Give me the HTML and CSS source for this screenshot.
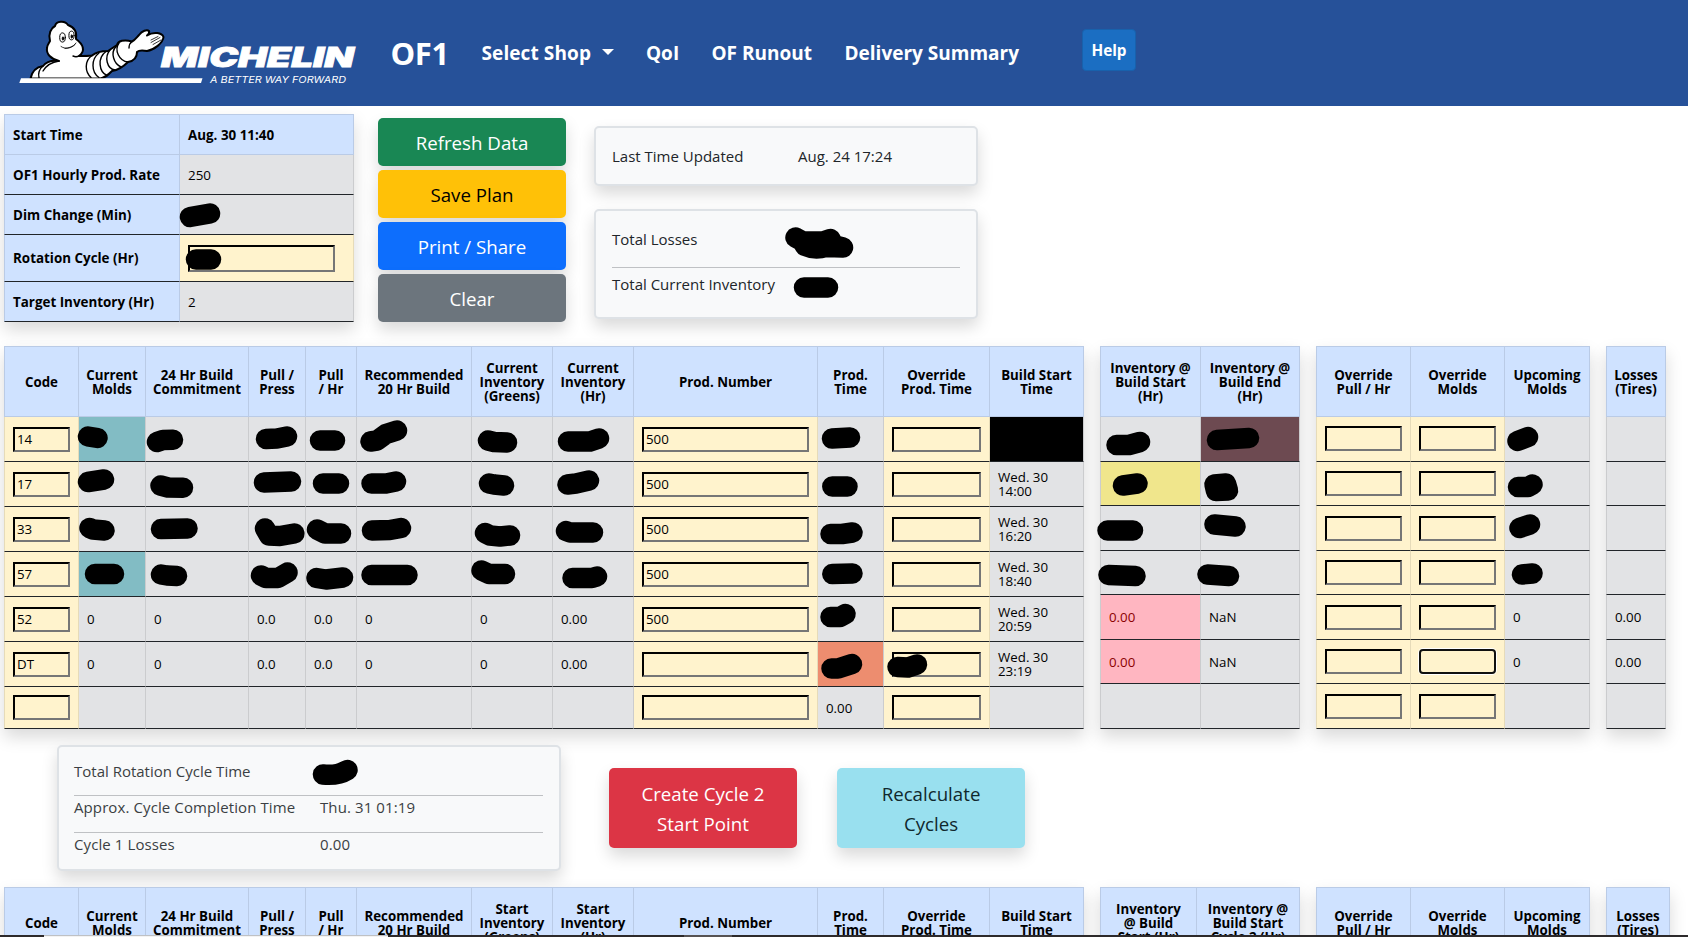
FILE: index.html
```html
<!DOCTYPE html>
<html lang="en">
<head>
<meta charset="utf-8">
<title>OF1</title>
<link rel="stylesheet" href="styles.css">
</head>
<body>
<header class="navbar">
  <svg class="logo" width="340" height="70" viewBox="18 18 340 70" role="img" aria-label="Michelin">
    <g stroke="#000" stroke-width="2" stroke-linejoin="round" stroke-linecap="round" fill="#fff">
      <path d="M30.500 78.500C32 71 37 67 43 66C46 62 51 60 59 61C51 59 46 54 47 48C47 45 49 43 50 41C48 34 51 28 55 26C56 21 65 20 68 25C74 27 77 32 76 39C83 44 86 51 79 56C83 56 88 56 92 55.500C96 52 103 51 108 51L117 45C118 41 124 39 132 41.500C135 40 137 37 139 35C142 31 147 29 149 31C150 33 147 35.500 147 35.500C154 31 162 33 163.500 37C163 43 154 50 147 51C142 50 139 50 137 52C137 57 134 61 128 62C124 66 118 70 112 71C108 75 105 78 100 78.500Z"/>
      <path fill="none" stroke-width="1.400" d="M43 66C39 69 38 74 39 77.500M59 61C52 62 46 66 43 71M79 56C77 57 75 57 73 56M92 55.500C84 61 85 72 91 77.500M99 53C91 59 91 72 99 77.500M106 51.500C97 58 99 72 107 75.500M110 50C104 57 107 69 115 70M116 46.500C110 53 114 64 121 67M119 43C114 50 119 61 128 62M132 41.500C130 43 129 46 129 48"/>
      <path fill="none" stroke-width=".8" d="M151 42.500L160 37.500M151 40L158 36.500M153 44.500L161 40M61 46.500C66 50 73 48 76 43M65 48.500C69 48 73 46.500 75 44.500"/>
      <ellipse cx="62.500" cy="37.500" rx="2.800" ry="4.600" stroke-width="1"/>
      <ellipse cx="71.500" cy="35.500" rx="2.600" ry="4.400" stroke-width="1"/>
      <ellipse cx="63" cy="38.500" rx=".8" ry="1.800" fill="#000" stroke-width=".8"/>
      <ellipse cx="71.800" cy="36.500" rx=".8" ry="1.800" fill="#000" stroke-width=".8"/>
    </g>
    <path d="M21 78.200H202.500L201 83H19.300Z" fill="#fff"/>
    <text class="logo-name" x="161" y="67" textLength="193" lengthAdjust="spacingAndGlyphs">MICHELIN</text>
    <text class="logo-tag" x="210" y="83" textLength="136" lengthAdjust="spacingAndGlyphs">A BETTER WAY FORWARD</text>
  </svg>
  <div class="brand">OF1</div>
  <nav class="nav">
    <a class="nav-shop">Select Shop<span class="caret"></span></a>
    <a class="nav-qoi">QoI</a>
    <a class="nav-runout">OF Runout</a>
    <a class="nav-delivery">Delivery Summary</a>
  </nav>
  <button class="help">Help</button>
</header>

<section class="top">
  <table class="grid info">
    <colgroup><col style="width:176px"><col style="width:174px"></colgroup>
    <tr class="info-head"><th>Start Time</th><th>Aug. 30 11:40</th></tr>
    <tr><th>OF1 Hourly Prod. Rate</th><td>250</td></tr>
    <tr><th>Dim Change (Min)</th><td></td></tr>
    <tr class="info-cycle"><th>Rotation Cycle (Hr)</th><td class="y"><input></td></tr>
    <tr><th>Target Inventory (Hr)</th><td>2</td></tr>
  </table>
  <div class="actions">
    <button class="btn green">Refresh Data</button>
    <button class="btn yellow">Save Plan</button>
    <button class="btn blue">Print / Share</button>
    <button class="btn gray">Clear</button>
  </div>
  <div class="cards">
    <div class="card updated"><span>Last Time Updated</span><span>Aug. 24 17:24</span></div>
    <div class="card totals">
      <div class="total">Total Losses</div>
      <div class="total ruled">Total Current Inventory</div>
    </div>
  </div>
</section>

<section class="tables plan">
  <table class="grid main">
    <colgroup><col style="width:75px"><col style="width:67px"><col style="width:103px"><col style="width:57px"><col style="width:51px"><col style="width:115px"><col style="width:81px"><col style="width:81px"><col style="width:184px"><col style="width:66px"><col style="width:106px"><col style="width:94px"></colgroup>
    <tr class="head"><th>Code</th><th>Current<br>Molds</th><th>24 Hr Build<br>Commitment</th><th>Pull /<br>Press</th><th>Pull<br>/ Hr</th><th>Recommended<br>20 Hr Build</th><th>Current<br>Inventory<br>(Greens)</th><th>Current<br>Inventory<br>(Hr)</th><th>Prod. Number</th><th>Prod.<br>Time</th><th>Override<br>Prod. Time</th><th>Build Start<br>Time</th></tr>
    <tr><td class="y"><input value="14"></td><td class="teal"></td><td></td><td></td><td></td><td></td><td></td><td></td><td class="y"><input value="500"></td><td></td><td class="y"><input></td><td class="black"></td></tr>
    <tr><td class="y"><input value="17"></td><td></td><td></td><td></td><td></td><td></td><td></td><td></td><td class="y"><input value="500"></td><td></td><td class="y"><input></td><td>Wed. 30<br>14:00</td></tr>
    <tr><td class="y"><input value="33"></td><td></td><td></td><td></td><td></td><td></td><td></td><td></td><td class="y"><input value="500"></td><td></td><td class="y"><input></td><td>Wed. 30<br>16:20</td></tr>
    <tr><td class="y"><input value="57"></td><td class="teal"></td><td></td><td></td><td></td><td></td><td></td><td></td><td class="y"><input value="500"></td><td></td><td class="y"><input></td><td>Wed. 30<br>18:40</td></tr>
    <tr><td class="y"><input value="52"></td><td>0</td><td>0</td><td>0.0</td><td>0.0</td><td>0</td><td>0</td><td>0.00</td><td class="y"><input value="500"></td><td></td><td class="y"><input></td><td>Wed. 30<br>20:59</td></tr>
    <tr><td class="y"><input value="DT"></td><td>0</td><td>0</td><td>0.0</td><td>0.0</td><td>0</td><td>0</td><td>0.00</td><td class="y"><input></td><td class="salmon"></td><td class="y"><input></td><td>Wed. 30<br>23:19</td></tr>
    <tr class="short"><td class="y"><input></td><td></td><td></td><td></td><td></td><td></td><td></td><td></td><td class="y"><input></td><td>0.00</td><td class="y"><input></td><td></td></tr>
  </table>
  <table class="grid side inventory">
    <colgroup><col style="width:101px"><col style="width:99px"></colgroup>
    <tr class="head"><th>Inventory @<br>Build Start<br>(Hr)</th><th>Inventory @<br>Build End<br>(Hr)</th></tr>
    <tr><td></td><td class="plum"></td></tr>
    <tr><td class="khaki"></td><td></td></tr>
    <tr><td></td><td></td></tr>
    <tr><td></td><td></td></tr>
    <tr><td class="pink">0.00</td><td>NaN</td></tr>
    <tr><td class="pink">0.00</td><td>NaN</td></tr>
    <tr><td></td><td></td></tr>
  </table>
  <table class="grid side override">
    <colgroup><col style="width:95px"><col style="width:94px"><col style="width:85px"></colgroup>
    <tr class="head"><th>Override<br>Pull / Hr</th><th>Override<br>Molds</th><th>Upcoming<br>Molds</th></tr>
    <tr><td class="y"><input></td><td class="y"><input></td><td></td></tr>
    <tr><td class="y"><input></td><td class="y"><input></td><td></td></tr>
    <tr><td class="y"><input></td><td class="y"><input></td><td></td></tr>
    <tr><td class="y"><input></td><td class="y"><input></td><td></td></tr>
    <tr><td class="y"><input></td><td class="y"><input></td><td>0</td></tr>
    <tr><td class="y"><input></td><td class="y"><input class="focused"></td><td>0</td></tr>
    <tr><td class="y"><input></td><td class="y"><input></td><td></td></tr>
  </table>
  <table class="grid side losses">
    <colgroup><col style="width:60px"></colgroup>
    <tr class="head"><th>Losses<br>(Tires)</th></tr>
    <tr><td></td></tr><tr><td></td></tr><tr><td></td></tr><tr><td></td></tr>
    <tr><td>0.00</td></tr><tr><td>0.00</td></tr><tr><td></td></tr>
  </table>
</section>

<section class="cycle">
  <div class="card summary">
    <div class="line"><span>Total Rotation Cycle Time</span><span></span></div>
    <div class="line ruled"><span>Approx. Cycle Completion Time</span><span>Thu. 31 01:19</span></div>
    <div class="line ruled"><span>Cycle 1 Losses</span><span>0.00</span></div>
  </div>
  <button class="btn big red">Create Cycle 2<br>Start Point</button>
  <button class="btn big cyan">Recalculate<br>Cycles</button>
</section>

<section class="tables next">
  <table class="grid main">
    <colgroup><col style="width:75px"><col style="width:67px"><col style="width:103px"><col style="width:57px"><col style="width:51px"><col style="width:115px"><col style="width:81px"><col style="width:81px"><col style="width:184px"><col style="width:66px"><col style="width:106px"><col style="width:94px"></colgroup>
    <tr class="head"><th>Code</th><th>Current<br>Molds</th><th>24 Hr Build<br>Commitment</th><th>Pull /<br>Press</th><th>Pull<br>/ Hr</th><th>Recommended<br>20 Hr Build</th><th>Start<br>Inventory<br>(Greens)</th><th>Start<br>Inventory<br>(Hr)</th><th>Prod. Number</th><th>Prod.<br>Time</th><th>Override<br>Prod. Time</th><th>Build Start<br>Time</th></tr>
  </table>
  <table class="grid side inventory">
    <colgroup><col style="width:97px"><col style="width:103px"></colgroup>
    <tr class="head"><th>Inventory<br>@ Build<br>Start (Hr)</th><th>Inventory @<br>Build Start<br>Cycle 2 (Hr)</th></tr>
  </table>
  <table class="grid side override">
    <colgroup><col style="width:95px"><col style="width:94px"><col style="width:85px"></colgroup>
    <tr class="head"><th>Override<br>Pull / Hr</th><th>Override<br>Molds</th><th>Upcoming<br>Molds</th></tr>
  </table>
  <table class="grid side losses-next">
    <colgroup><col style="width:64px"></colgroup>
    <tr class="head"><th>Losses<br>(Tires)</th></tr>
  </table>
</section>

<svg class="marks" width="1688" height="937" viewBox="0 0 1688 937" aria-hidden="true">
  <path d="M190 217L210 213.500M196 259.500H211M804 287.500H828"/>
  <path d="M323 774.500Q338 776 347.500 770"/>
  <path class="solid" d="M795.500 237.500L803 241.500H823L830.500 239L833 245L843 247.500L826 247Q815 250.500 805 246L802 241Z"/>
  <path d="M88 436.500L97.500 438M157 442L163 440L173 439.700M266 439L277 438.500L287 436.500M320 440.500H335M370.500 441.500L377 440.500L386 434L397 430.500M488 440.500L494 442L507 442.500M568 441.500H590L599 438.500M832 438.500L850 437.500M1116.500 445L1129 445L1140 442M1217 440L1249 438M1517.500 441L1528 437"/>
  <path d="M88 482L104 479.500M160.500 485.500L168 487.500L183 487.700M264 482.500L291 481.500M323 483.500H339M371.500 483.500H386L396 481.500M489 483.500L494 484.500L504 485.500M567.500 484.500L576 483.500L589 480.500M832.300 486.500H847.500M1123 485.500L1137.500 483.500M1518 487H1528L1532.500 484.500"/>
  <path class="solid" d="M1214.500 484.500L1226 483.500L1228 490.500L1216 491Z"/>
  <path d="M89.500 528L93 529.500L104.500 530.500M161 529L187.500 528.500M265 528.500L269 535.500L280 536L294.300 533.500M317 529.500L325 533.500H341M372 530.500L390 530L401 528M485 533L490 535.500L500 536.500L510 535.500M566 531L570 532.500H593M830.500 534H842L852.500 532.500M1107.500 530.500H1133M1214.500 524.500L1235.500 526.500M1519.500 528L1530 524.500"/>
  <path d="M95 574H114M161 574.500L167 575.500L177 576M261 575.500L266 578H278L287.500 572.500M316.500 578L326 579.500L343 577.500M371.500 575H407.500M481.500 570.500L489 574H505M572.500 578H592L597 576.500M832.300 574L852.500 573.500M1108.500 575L1135.500 576M1207.500 574.500L1229 576M1522 574.500L1532.500 573.500"/>
  <path d="M830.500 617H840L845.500 614M831.500 668.500H838L852 664M897.500 667L908 667.500L917 664.500"/>
</svg>
<div class="taskbar"><i class="tab-light"></i><i class="tab-gray"></i></div>
</body>
</html>
```
FILE: styles.css
```css
* { box-sizing: border-box; }
html, body { margin: 0; height: 937px; overflow: hidden; }
body {
  position: relative;
  background: #fff;
  color: #212529;
  font: 15px/24px "Open Sans", "Noto Sans", sans-serif;
}
button, input { font-family: inherit; }

.navbar {
  display: flex;
  height: 106px;
  padding: 18px 0 0 18px;
  background: #265199;
  color: #fff;
  font-weight: 700;
  white-space: nowrap;
}
.logo { flex: none; }
.logo-name { font: italic 900 26.500px Inter, Lato, sans-serif; fill: #fff; stroke: #fff; stroke-width: .8px; }
.logo-tag { font: italic 400 9px Inter, sans-serif; fill: #fff; }
.brand { width: 91px; margin-left: 32.500px; font-size: 31px; line-height: 70px; letter-spacing: -.4px; }
.nav { display: flex; width: 600.500px; font-size: 19px; line-height: 70px; }
.nav-shop { width: 164.500px; letter-spacing: .1px; }
.nav-qoi { width: 65.500px; }
.nav-runout { width: 133px; }
.caret {
  display: inline-block;
  margin-left: 11px;
  vertical-align: 5px;
  border: 6px solid transparent;
  border-top-color: #fff;
  border-bottom: 0;
}
.help {
  width: 54px;
  height: 42px;
  margin-top: 11px;
  padding: 0;
  border: 1px solid #1861ac;
  border-radius: 4px;
  background: #1b6ec2;
  color: #fff;
  font-size: 15.300px;
  font-weight: 700;
}

.top { display: flex; height: 240px; padding: 8px 0 0 4px; }

.grid {
  flex: none;
  table-layout: fixed;
  border-collapse: separate;
  border-spacing: 0;
  color: #000;
  font-size: 13.300px;
  line-height: 14px;
  box-shadow: 0 8px 16px rgba(0, 0, 0, .15);
}
.grid th, .grid td {
  padding: 0 8px;
  border: solid;
  border-width: 0 1px 1px 0;
  text-align: left;
  vertical-align: middle;
}
.grid th { border-color: #bacbe6; background: #cfe2ff; font-weight: 700; white-space: nowrap; }
.grid td { border-color: #cbccce #cbccce #212529; background: #e2e3e5; }
.grid tr > :first-child { border-left-width: 1px; }
.grid tr:first-child th { border-top-width: 1px; }
.grid .y { border-right-color: #e6dbb9; border-left-color: #e6dbb9; background: #fff3cd; }
.grid .teal { background: #82bcc4; }
.grid .black { background: #000; }
.grid .salmon { background: #ed8d6f; }
.grid .plum { background: #6d4a51; }
.grid .khaki { background: #f0e68c; }
.grid .pink { background: #ffb6c1; color: #8b0000; }
.grid input {
  display: block;
  width: 100%;
  height: 25px;
  padding: 1px 2px;
  border: 2px inset #767676;
  border-color: #212121 #767676 #767676 #212121;
  border-radius: 0;
  outline: 0;
  background: transparent;
  color: #000;
  font-size: 13.300px;
}
.grid input.focused { border: 2px solid #101010; border-radius: 4px; box-shadow: 0 0 0 1px #fff; }

.info { width: 350px; height: 208px; font-size: 13.400px; }
.info tr { height: 40px; }
.info .info-head { height: 41px; }
.info .info-cycle { height: 47px; }
.info tr:not(:first-child) th { border-bottom-color: #212529; }
.info input { width: 147px; height: 27px; }

.actions { display: flex; flex-direction: column; gap: 4px; width: 188px; margin: 4px 0 0 24px; }
.btn {
  height: 48px;
  padding: 2px 0 0;
  border: 0;
  border-radius: 5px;
  color: #fff;
  font-size: 18.700px;
  line-height: 30px;
  box-shadow: 0 8px 16px rgba(0, 0, 0, .15);
}
.green { background: #198754; }
.yellow { background: #ffc107; color: #000; }
.blue { background: #0d6efd; }
.gray { background: #6c757d; }
.red { background: #dc3545; }
.cyan { background: #99e0ef; color: #10282d; }

.cards { display: flex; flex-direction: column; gap: 23px; width: 384px; margin: 12px 0 0 28px; }
.card {
  border: 2px solid #dee2e6;
  border-radius: 5px;
  background: #f8f9fa;
  box-shadow: 0 8px 16px rgba(0, 0, 0, .15);
}
.updated { display: grid; grid-template-columns: 186px 1fr; align-items: center; height: 60px; padding: 0 16px; }
.totals { height: 110px; padding: 16px 16px 0; }
.total { height: 40px; }
.ruled { border-top: 1px solid #bfc1c4; }
.total.ruled { padding-top: 4px; }

.tables { display: flex; align-items: flex-start; gap: 16px; padding-left: 4px; }
.plan { height: 383px; }
.head { height: 71px; }
.grid .head th { padding: 0; text-align: center; }
.main { width: 1080px; }
.inventory { width: 200px; }
.override { width: 274px; }
.losses { width: 60px; }
.losses-next { width: 64px; }
.main tr:not(.head) { height: 45px; }
.main tr.short { height: 42px; }
.side tr:not(.head) { height: 45px; }
.side tr:nth-child(3), .side tr:nth-child(5), .side tr:nth-child(7) { height: 44px; }
.override tr:nth-child(2) input { margin-bottom: 2px; }

.cycle { display: flex; height: 158px; padding: 16px 0 0 56.500px; }
.summary { width: 504.500px; height: 125.500px; padding: 12px 16px 0 15.500px; color: #3b3f43; }
.line { display: grid; grid-template-columns: 246px 1fr; height: 37px; }
.line:first-child { height: 36px; }
.line.ruled { line-height: 23px; letter-spacing: .1px; }
.big { width: 188px; height: 80px; margin: 23px 0 0 48px; }
.big + .big { margin-left: 40px; }

.marks { position: absolute; top: 0; left: 0; pointer-events: none; }
.marks path { fill: none; stroke: #000; stroke-width: 20.500px; stroke-linecap: round; stroke-linejoin: round; }
.marks .solid { fill: #000; }

.taskbar { position: absolute; top: 935px; left: 0; display: flex; width: 1688px; height: 2px; padding-left: 44px; background: #2d2a2b; }
.tab-light { width: 344px; border-top: 1px solid #bfc1c4; background: #f3f3f3; }
.tab-gray { width: 48px; margin-left: 296px; background: #565354; }
```
